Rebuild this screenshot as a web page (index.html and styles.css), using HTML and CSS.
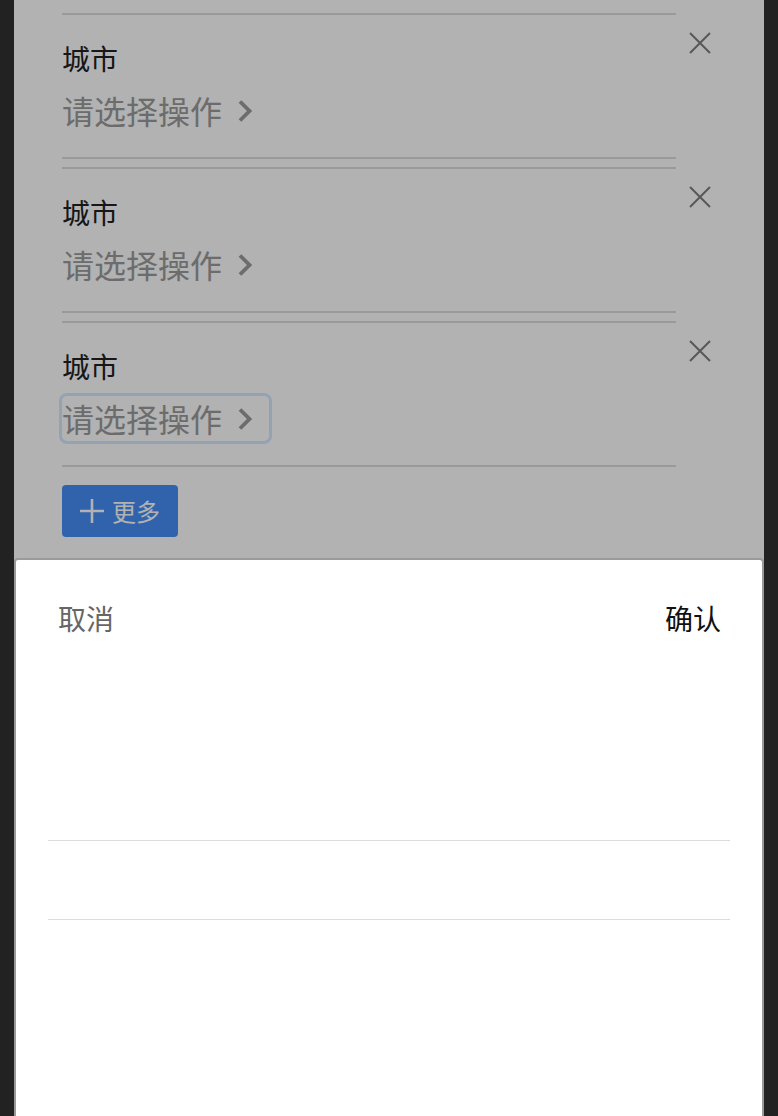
FILE: index.html
```html
<!DOCTYPE html>
<html lang="zh-CN">
<head>
<meta charset="utf-8">
<title>城市选择</title>
<link rel="stylesheet" href="styles.css">
</head>
<body>
<div class="app">
  <div class="rows">
    <div class="row">
      <div class="field">
        <div class="label">城市</div>
        <button class="select">请选择操作<svg class="chev" viewBox="0 0 24 24" width="24" height="24"><polyline points="6,2.5 15.5,12 6,21.5" fill="none" stroke="currentColor" stroke-width="3.8"/></svg></button>
      </div>
      <button class="close"><svg viewBox="0 0 22 22" width="22" height="22"><path d="M1 1L21 21M21 1L1 21" stroke="currentColor" stroke-width="2" fill="none"/></svg></button>
    </div>
    <div class="row">
      <div class="field">
        <div class="label">城市</div>
        <button class="select">请选择操作<svg class="chev" viewBox="0 0 24 24" width="24" height="24"><polyline points="6,2.5 15.5,12 6,21.5" fill="none" stroke="currentColor" stroke-width="3.8"/></svg></button>
      </div>
      <button class="close"><svg viewBox="0 0 22 22" width="22" height="22"><path d="M1 1L21 21M21 1L1 21" stroke="currentColor" stroke-width="2" fill="none"/></svg></button>
    </div>
    <div class="row">
      <div class="field">
        <div class="label">城市</div>
        <button class="select focused">请选择操作<svg class="chev" viewBox="0 0 24 24" width="24" height="24"><polyline points="6,2.5 15.5,12 6,21.5" fill="none" stroke="currentColor" stroke-width="3.8"/></svg></button>
      </div>
      <button class="close"><svg viewBox="0 0 22 22" width="22" height="22"><path d="M1 1L21 21M21 1L1 21" stroke="currentColor" stroke-width="2" fill="none"/></svg></button>
    </div>
  </div>
  <div class="more-wrap">
    <button class="more"><svg class="plus" viewBox="0 0 24 24" width="24" height="24"><path d="M12 0V24M0 12H24" stroke="currentColor" stroke-width="2.6" fill="none"/></svg>更多</button>
  </div>
</div>
<div class="mask"></div>
<div class="sheet">
  <div class="sheet-head">
    <span class="cancel">取消</span>
    <span class="confirm">确认</span>
  </div>
  <div class="picker">
    <div class="indicator"></div>
  </div>
</div>
</body>
</html>
```
FILE: styles.css
```css
* { box-sizing: border-box; }
html, body {
  margin: 0;
  padding: 0;
  background: #222;
  height: 100%;
  overflow: hidden;
  font-family: "Noto Sans CJK SC", "Noto Sans", sans-serif;
}
.app {
  width: 750px;
  margin: 0 auto;
  min-height: 100%;
  background: #fff;
  padding-top: 13px;
}
.rows {
  display: flex;
  flex-direction: column;
  gap: 8px;
}
.row {
  display: flex;
  align-items: flex-start;
  padding: 0 40px 0 48px;
}
.field {
  flex: 1;
  border-top: 2px solid #ddd;
  border-bottom: 2px solid #ddd;
  padding: 23px 0 24px;
}
.label {
  font-size: 28px;
  line-height: 40px;
  color: #222;
}
.select {
  margin-top: 10px;
  display: inline-flex;
  align-items: center;
  height: 45px;
  padding: 0 11px 0 0;
  border: none;
  background: none;
  font-family: inherit;
  font-size: 32px;
  line-height: 43px;
  color: #9b9b9b;
  border-radius: 5px;
}
.select.focused {
  outline: 3px solid #d6e8ff;
  outline-offset: 0;
}
.chev {
  margin-left: 12px;
  display: block;
}
.close {
  width: 48px;
  height: 42px;
  margin-top: 9px;
  padding: 0;
  border: none;
  background: none;
  color: #7e7e7e;
  display: flex;
  align-items: center;
  justify-content: center;
}
.close svg { display: block; }
.more-wrap {
  padding: 18px 48px 0;
}
.more {
  display: inline-flex;
  align-items: center;
  height: 52px;
  padding: 0 18px;
  border: none;
  border-radius: 4px;
  background: #458ff6;
  color: #fff;
  font-family: inherit;
  font-size: 24px;
  line-height: 30px;
}
.plus {
  display: block;
  margin-right: 8px;
}
.mask {
  position: fixed;
  top: 0;
  bottom: 0;
  left: 50%;
  width: 750px;
  margin-left: -375px;
  background: rgba(0, 0, 0, 0.3);
}
.sheet {
  position: fixed;
  top: 558px;
  bottom: 0;
  left: 50%;
  width: 750px;
  margin-left: -375px;
  background: #fff;
  border: 2px solid #9a9a9a;
  border-bottom: none;
  border-radius: 4px 4px 0 0;
}
.sheet-head {
  height: 116px;
  display: flex;
  align-items: center;
  justify-content: space-between;
  padding: 0 41px 0 42px;
  font-size: 28px;
  line-height: 40px;
}
.cancel { color: #666; }
.confirm { color: #111; }
.picker {
  margin: 0 32px;
  padding-top: 164px;
}
.indicator {
  height: 80px;
  border-top: 1px solid #ddd;
  border-bottom: 1px solid #ddd;
}
```
